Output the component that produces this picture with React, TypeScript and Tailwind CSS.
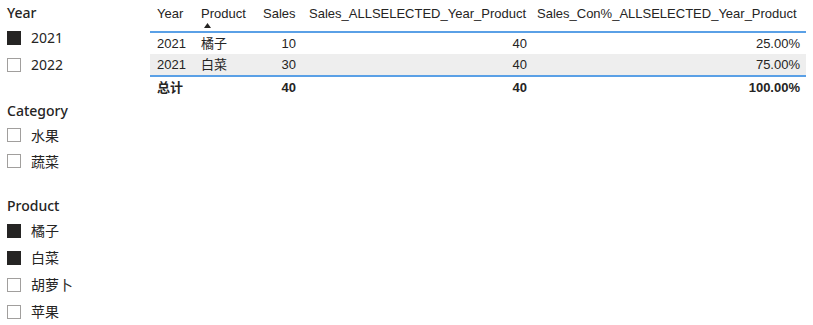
import React from "react";

const cjk = "font-['Liberation_Sans','Noto_Sans_CJK_SC',sans-serif]";

type Item = { label: string; checked: boolean };

const slicers: { title: string; items: Item[]; gap: string }[] = [
  {
    title: "Year",
    gap: "",
    items: [
      { label: "2021", checked: true },
      { label: "2022", checked: false },
    ],
  },
  {
    title: "Category",
    gap: "mt-[20px]",
    items: [
      { label: "水果", checked: false },
      { label: "蔬菜", checked: false },
    ],
  },
  {
    title: "Product",
    gap: "mt-[19px]",
    items: [
      { label: "橘子", checked: true },
      { label: "白菜", checked: true },
      { label: "胡萝卜", checked: false },
      { label: "苹果", checked: false },
    ],
  },
];

const rows = [
  { year: "2021", product: "橘子", sales: "10", all: "40", pct: "25.00%", shade: false },
  { year: "2021", product: "白菜", sales: "30", all: "40", pct: "75.00%", shade: true },
];

function Slicer({ title, items, gap, rowH }: { title: string; items: Item[]; gap: string; rowH: string }) {
  return (
    <div className={gap}>
      <div className="h-6 flex items-center pl-[7px] text-[14px] font-medium text-[#252423] font-['Noto_Sans',sans-serif]">
        {title}
      </div>
      {items.map((it) => (
        <div key={it.label} className={`${rowH} flex items-center pl-[7px]`}>
          {it.checked ? (
            <span className="w-[14px] h-[14px] bg-[#252423] border border-[#252423]" />
          ) : (
            <span className="w-[14px] h-[14px] bg-white border border-[#a19f9d]" />
          )}
          <span className="ml-[10px] text-[14px] text-[#252423] font-['Noto_Sans','Noto_Sans_CJK_SC',sans-serif]">
            {it.label}
          </span>
        </div>
      ))}
    </div>
  );
}

export default function App() {
  return (
    <div className="w-[813px] h-[325px] bg-white flex overflow-hidden">
      {/* slicers */}
      <div className="w-[150px] flex flex-col">
        {slicers.map((s, i) => (
          <Slicer
            key={s.title}
            title={s.title}
            items={s.items}
            gap={s.gap}
            rowH={i === 1 ? "h-[26px]" : "h-[27px]"}
          />
        ))}
      </div>

      {/* table */}
      <div className={`flex-1 text-[13px] text-[#252423] ${cjk}`}>
        <div className="w-[656px]">
          <div className="flex h-[33px] border-b-2 border-[#5aa0e6]">
            <div className="w-[43px] pl-[7px] pt-[4px]">Year</div>
            <div className="w-[62px] pl-[8px] pt-[4px] relative">
              Product
              <svg className="absolute left-[11px] top-[23px]" width="7" height="5" viewBox="0 0 7 5">
                <path d="M0 5 L3.5 0 L7 5 Z" fill="#252423" />
              </svg>
            </div>
            <div className="w-[45px] pl-[8px] pt-[4px]">Sales</div>
            <div className="w-[231px] pl-[9px] pt-[4px]">Sales_ALLSELECTED_Year_Product</div>
            <div className="w-[275px] pl-[6px] pt-[4px]">Sales_Con%_ALLSELECTED_Year_Product</div>
          </div>
          {rows.map((r, i) => (
            <div
              key={i}
              className={`flex items-center ${r.shade ? "bg-[#eeeeee] border-b-2 border-[#5aa0e6] h-[23px]" : "h-[21px]"}`}
            >
              <div className="w-[43px] pl-[7px]">{r.year}</div>
              <div className="w-[62px] pl-[8px]">{r.product}</div>
              <div className="w-[45px] pr-[4px] text-right">{r.sales}</div>
              <div className="w-[231px] pr-[4px] text-right">{r.all}</div>
              <div className="w-[275px] pr-[6px] text-right">{r.pct}</div>
            </div>
          ))}
          <div className="flex items-center h-[22px] font-bold">
            <div className="w-[105px] pl-[7px]">总计</div>
            <div className="w-[45px] pr-[4px] text-right">40</div>
            <div className="w-[231px] pr-[4px] text-right">40</div>
            <div className="w-[275px] pr-[6px] text-right">100.00%</div>
          </div>
        </div>
      </div>
    </div>
  );
}
